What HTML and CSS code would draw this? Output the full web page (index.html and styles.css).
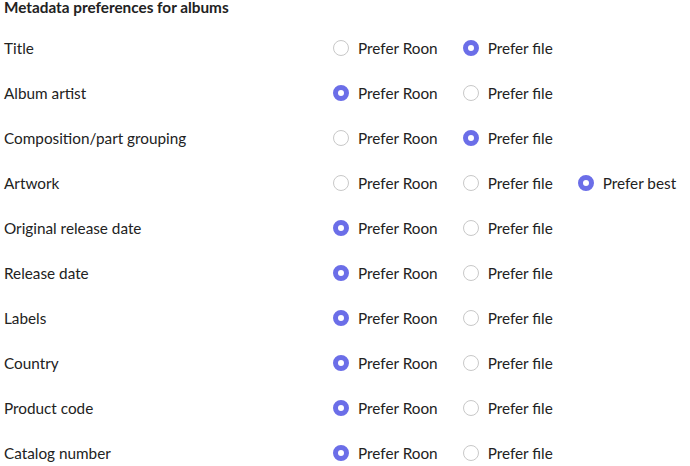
FILE: index.html
```html
<!DOCTYPE html>
<html>
<head>
<meta charset="utf-8">
<link rel="stylesheet" href="styles.css">
</head>
<body>
<div class="page">
  <h1 class="heading">Metadata preferences for albums</h1>
  <div class="rows">
    <div class="row"><div class="label">Title</div><div class="opts"><span class="opt"><span class="radio"></span>Prefer Roon</span><span class="opt"><span class="radio on"></span>Prefer file</span></div></div>
    <div class="row"><div class="label">Album artist</div><div class="opts"><span class="opt"><span class="radio on"></span>Prefer Roon</span><span class="opt"><span class="radio"></span>Prefer file</span></div></div>
    <div class="row"><div class="label">Composition/part grouping</div><div class="opts"><span class="opt"><span class="radio"></span>Prefer Roon</span><span class="opt"><span class="radio on"></span>Prefer file</span></div></div>
    <div class="row"><div class="label">Artwork</div><div class="opts"><span class="opt"><span class="radio"></span>Prefer Roon</span><span class="opt"><span class="radio"></span>Prefer file</span><span class="opt"><span class="radio on"></span>Prefer best</span></div></div>
    <div class="row"><div class="label">Original release date</div><div class="opts"><span class="opt"><span class="radio on"></span>Prefer Roon</span><span class="opt"><span class="radio"></span>Prefer file</span></div></div>
    <div class="row"><div class="label">Release date</div><div class="opts"><span class="opt"><span class="radio on"></span>Prefer Roon</span><span class="opt"><span class="radio"></span>Prefer file</span></div></div>
    <div class="row"><div class="label">Labels</div><div class="opts"><span class="opt"><span class="radio on"></span>Prefer Roon</span><span class="opt"><span class="radio"></span>Prefer file</span></div></div>
    <div class="row"><div class="label">Country</div><div class="opts"><span class="opt"><span class="radio on"></span>Prefer Roon</span><span class="opt"><span class="radio"></span>Prefer file</span></div></div>
    <div class="row"><div class="label">Product code</div><div class="opts"><span class="opt"><span class="radio on"></span>Prefer Roon</span><span class="opt"><span class="radio"></span>Prefer file</span></div></div>
    <div class="row"><div class="label">Catalog number</div><div class="opts"><span class="opt"><span class="radio on"></span>Prefer Roon</span><span class="opt"><span class="radio"></span>Prefer file</span></div></div>
  </div>
</div>
</body>
</html>
```
FILE: styles.css
```css
html, body {
  margin: 0;
  padding: 0;
  background: #ffffff;
}
body {
  font-family: Lato, "Open Sans", sans-serif;
  color: #222222;
}
.page {
  padding: 0 0 0 4px;
}
.heading {
  margin: 0;
  font-size: 15.3px;
  font-weight: 700;
  line-height: 14px;
  height: 25px;
}
.rows {
  display: flex;
  flex-direction: column;
}
.row {
  display: grid;
  grid-template-columns: 329px 1fr;
  align-items: center;
  height: 45px;
}
.label {
  font-size: 15.3px;
}
.opts {
  display: flex;
  gap: 25px;
  align-items: center;
}
.opt {
  display: flex;
  align-items: center;
  gap: 9px;
  font-size: 15.3px;
}
.radio {
  width: 16px;
  height: 16px;
  box-sizing: border-box;
  border-radius: 50%;
  border: 1.5px solid #c8c8c8;
  background: #fff;
}
.radio.on {
  border: 5px solid #6b6ee8;
}
```
